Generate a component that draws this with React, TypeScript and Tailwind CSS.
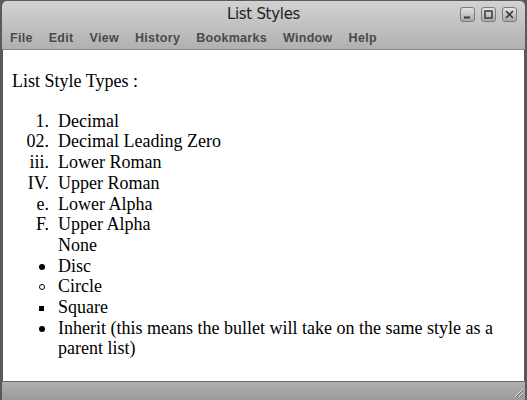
import React from 'react';

const menu = ['File', 'Edit', 'View', 'History', 'Bookmarks', 'Window', 'Help'];

type Marker = string | 'disc' | 'circle' | 'square' | null;

const items: { label: string; marker: Marker }[] = [
    { label: 'Decimal', marker: '1.' },
    { label: 'Decimal Leading Zero', marker: '02.' },
    { label: 'Lower Roman', marker: 'iii.' },
    { label: 'Upper Roman', marker: 'IV.' },
    { label: 'Lower Alpha', marker: 'e.' },
    { label: 'Upper Alpha', marker: 'F.' },
    { label: 'None', marker: null },
    { label: 'Disc', marker: 'disc' },
    { label: 'Circle', marker: 'circle' },
    { label: 'Square', marker: 'square' },
    { label: 'Inherit (this means the bullet will take on the same style as a parent list)', marker: 'disc' },
];

const MarkerView: React.FC<{ marker: Marker }> = ({ marker }) => {
    if (marker === null) return null;
    if (marker === 'disc') return <span className="mr-[13px] mt-[8px] w-[6px] h-[6px] rounded-full bg-black" />;
    if (marker === 'circle') return <span className="mr-[13px] mt-[8px] w-[6px] h-[6px] rounded-full border border-black" />;
    if (marker === 'square') return <span className="mr-[14px] mt-[9px] w-[5px] h-[5px] bg-black" />;
    return <span className="mr-[9px]">{marker}</span>;
};

const WinButton: React.FC<{ kind: 'min' | 'max' | 'close' }> = ({ kind }) => (
    <div className="w-[15px] h-[15px] rounded-[3px] border border-[#7a7a7a] bg-gradient-to-b from-[#e4e4e4] to-[#a9a9a9] flex items-center justify-center">
        <svg width="11" height="11" viewBox="0 0 11 11">
            {kind === 'min' && <rect x="2" y="7.5" width="6" height="2" fill="#3a3a3a" />}
            {kind === 'max' && <rect x="2" y="2" width="7" height="7" fill="none" stroke="#3a3a3a" strokeWidth="1.5" />}
            {kind === 'close' && <path d="M2 2 L9 9 M9 2 L2 9" stroke="#3a3a3a" strokeWidth="1.6" />}
        </svg>
    </div>
);

export default function App() {
    return (
        <div className="w-[527px] h-[400px] flex flex-col bg-[#5a5a5a] overflow-hidden">
            {/* title bar */}
            <div className="mx-[2px] mt-[1px] rounded-t-[5px] bg-gradient-to-b from-[#d2d2d2] to-[#b0b0b0]">
                <div className="relative h-[27px] flex items-center justify-center">
                    <span className="text-[15px] text-[#222] font-['DejaVu_Sans',sans-serif] tracking-[-0.3px]">List Styles</span>
                    <div className="absolute right-[8px] top-[6px] flex gap-[6px]">
                        <WinButton kind="min" />
                        <WinButton kind="max" />
                        <WinButton kind="close" />
                    </div>
                </div>
                <div className="h-[22px] flex items-center pl-[8px] gap-[16px] text-[12.5px] font-bold text-[#4a4a4a] font-['Liberation_Sans',sans-serif] border-b border-[#888]">
                    {menu.map(m => (
                        <span key={m} className="tracking-[0.3px]">{m}</span>
                    ))}
                </div>
            </div>

            {/* content */}
            <div className="flex-1 mx-[3px] bg-white font-['Liberation_Serif',serif] text-[18px] text-black leading-[20.7px] pl-[9px]">
                <p className="mt-[21px] mb-[19px]">List Style Types :</p>
                <ul className="flex flex-col">
                    {items.map(it => (
                        <li key={it.label} className="flex">
                            <div className="w-[46px] shrink-0 flex justify-end items-start">
                                <MarkerView marker={it.marker} />
                            </div>
                            <span className="pr-[12px]">{it.label}</span>
                        </li>
                    ))}
                </ul>
            </div>

            {/* status bar */}
            <div className="relative h-[19px] mx-[2px] border-t border-[#6e6e6e] bg-gradient-to-b from-[#b0b0b0] to-[#9a9a9a]">
                <svg className="absolute right-[1px] bottom-[2px]" width="12" height="12" viewBox="0 0 12 12">
                    <path d="M11 3 L3 11 M11 7 L7 11" stroke="#e8e8e8" strokeWidth="1" />
                    <path d="M11 4 L4 11 M11 8 L8 11" stroke="#6a6a6a" strokeWidth="1" />
                </svg>
            </div>
        </div>
    );
}
